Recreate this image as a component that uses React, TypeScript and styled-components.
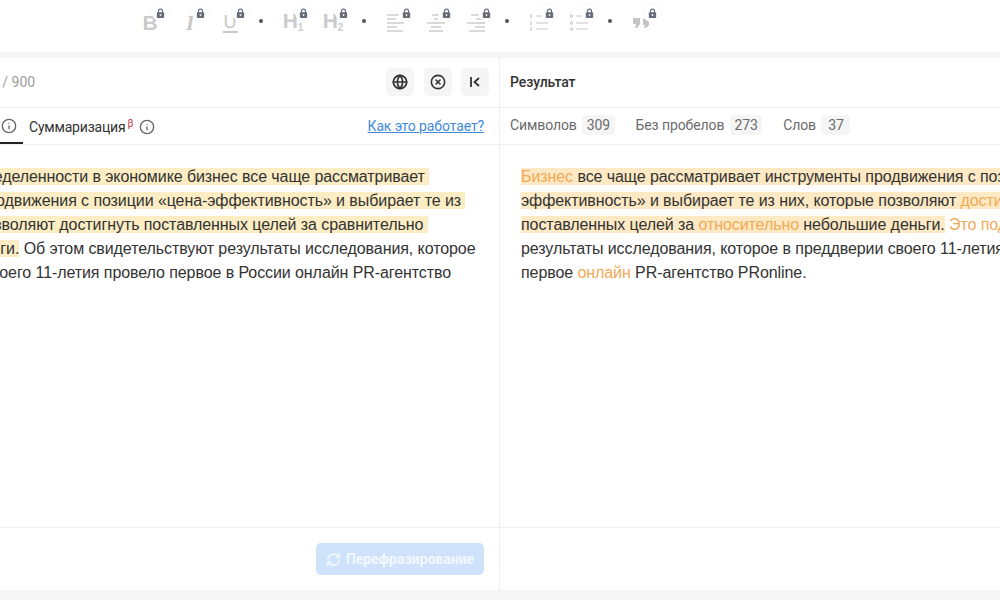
import React from "react";
import styled, { createGlobalStyle } from "styled-components";
import { CircleX, Globe, Info, RefreshCw } from "lucide-react";

const GlobalStyle = createGlobalStyle`
  html, body {
    margin: 0;
    height: 100%;
    overflow: hidden;
    background: #f6f6f6;
  }
  body {
    font-family: "Liberation Sans", Arial, sans-serif;
  }
  #root {
    height: 100%;
  }
`;

const ALIGN = {
  left: [[1, 15], [1, 10], [1, 18], [1, 11], [1, 17]],
  center: [[6, 14], [8, 12], [1, 19], [5, 15], [3, 17]],
  right: [[5, 19], [10, 19], [1, 19], [9, 19], [3, 19]],
};

const AlignIcon: React.FC<{ kind: keyof typeof ALIGN }> = ({ kind }) => (
  <svg width="20" height="20" viewBox="0 0 20 20" stroke="#c4c4c4" strokeWidth="1.3">
    {ALIGN[kind].map(([a, b], i) => (
      <line key={i} x1={a} x2={b} y1={2 + i * 4} y2={2 + i * 4} />
    ))}
  </svg>
);

const ListIcon: React.FC<{ numbered?: boolean }> = ({ numbered }) => (
  <svg width="20" height="20" viewBox="0 0 20 20" stroke="#cccccc" strokeWidth="1.1" fill="none">
    {[3, 10, 16].map((y) => (
      <g key={y}>
        <line x1="7" x2="19" y1={y} y2={y} />
        {numbered ? (
          <line x1="2" x2="2" y1={y - 2} y2={y + 2} strokeWidth="1.4" />
        ) : (
          <circle cx="2.5" cy={y} r="1.2" />
        )}
      </g>
    ))}
  </svg>
);

const QuoteIcon = () => (
  <svg width="20" height="20" viewBox="0 0 20 20" fill="#c4c4c4">
    <path d="M1 5h7v6l-3 4H3l1-4H1zM11 5l6 4v3l-3 3h-2l1-3h-2z" />
  </svg>
);

const LockIcon = () => (
  <svg width="9" height="11" viewBox="0 0 11 13" fill="none">
    <path d="M3 5.5V3.6a2.5 2.5 0 0 1 5 0v1.9" stroke="#666c78" strokeWidth="1.5" />
    <rect x="1" y="5" width="9" height="7" rx="1.2" fill="#666c78" />
    <circle cx="5.5" cy="8.4" r="1.1" fill="#fff" />
  </svg>
);

const App: React.FC = () => {
  const tools: Array<React.ReactNode | "dot"> = [
    <Letter>B</Letter>,
    <SlabItalic>I</SlabItalic>,
    <UnderlineLetter>U</UnderlineLetter>,
    "dot",
    <Letter>H<small>1</small></Letter>,
    <Letter>H<small>2</small></Letter>,
    "dot",
    <AlignIcon kind="left" />,
    <AlignIcon kind="center" />,
    <AlignIcon kind="right" />,
    "dot",
    <ListIcon numbered />,
    <ListIcon />,
    "dot",
    <QuoteIcon />,
  ];

  return (
    <Page>
      <GlobalStyle />
      <Toolbar>
        {tools.map((tool, i) =>
          tool === "dot" ? (
            <DotSlot key={i} />
          ) : (
            <ToolItem key={i}>
              {tool}
              <LockBadge>
                <LockIcon />
              </LockBadge>
            </ToolItem>
          )
        )}
      </Toolbar>
      <Workspace>
        <Panel>
          <PanelHeader>
            <Counter>0 / 900</Counter>
            <HeaderActions>
              <IconButton>
                <Globe size={16} strokeWidth={2.6} />
              </IconButton>
              <IconButton>
                <CircleX size={16} strokeWidth={2.4} />
              </IconButton>
              <IconButton>
                <svg width="14" height="14" viewBox="0 0 14 14" fill="none" stroke="#333" strokeWidth="1.8">
                  <path d="M3 2v10M11 3L6.5 7l4.5 4" />
                </svg>
              </IconButton>
            </HeaderActions>
          </PanelHeader>
          <TabsRow>
            <Tabs>
              <ActiveTab>
                <Info size={16} color="#666" />
              </ActiveTab>
              <Tab>
                Суммаризация<Beta>β</Beta>
                <Info size={16} color="#666" />
              </Tab>
            </Tabs>
            <HowLink>Как это работает?</HowLink>
          </TabsRow>
          <SourceText>
            <Line><Mark>В рамках неопределенности в экономике бизнес все чаще рассматривает </Mark></Line>
            <Line><Mark>инструменты продвижения с позиции «цена-эффективность» и выбирает те из </Mark></Line>
            <Line><Mark>них, которые позволяют достигнуть поставленных целей за сравнительно </Mark></Line>
            <Line><Mark>небольшие деньги.</Mark> Об этом свидетельствуют результаты исследования, которое</Line>
            <Line>в преддверии своего 11-летия провело первое в России онлайн PR-агентство</Line>
          </SourceText>
          <PanelFooter>
            <SubmitButton>
              <RefreshCw size={15} strokeWidth={2.4} />
              Перефразирование
            </SubmitButton>
          </PanelFooter>
        </Panel>
        <Panel>
          <PanelHeader>
            <ResultTitle>Результат</ResultTitle>
          </PanelHeader>
          <StatsRow>
            <Stat>Символов<Chip>309</Chip></Stat>
            <Stat>Без пробелов<Chip>273</Chip></Stat>
            <Stat>Слов<Chip>37</Chip></Stat>
          </StatsRow>
          <ResultText>
            <Line><Mark $warm><Changed>Бизнес</Changed> все чаще рассматривает инструменты продвижения с позиции «цена-</Mark></Line>
            <Line><Mark $warm>эффективность» и выбирает те из них, которые позволяют <Changed>достигнуть</Changed></Mark></Line>
            <Line><Mark $warm>поставленных целей за <Changed>относительно</Changed> небольшие деньги.</Mark> <Changed>Это подтверждают</Changed></Line>
            <Line>результаты исследования, которое в преддверии своего 11-летия провело</Line>
            <Line>первое <Changed>онлайн</Changed> PR-агентство PRonline.</Line>
          </ResultText>
          <PanelFooter />
        </Panel>
      </Workspace>
    </Page>
  );
};

const Page = styled.div`
  height: 100%;
  display: flex;
  flex-direction: column;
  padding-bottom: 10px;
  box-sizing: border-box;
`;

const Toolbar = styled.div`
  height: 52px;
  flex: none;
  display: flex;
  align-items: center;
  padding: 0 0 6px 130px;
  box-sizing: border-box;
  background: #fff;
  margin-bottom: 6px;
`;

const ToolItem = styled.div`
  position: relative;
  width: 40px;
  height: 20px;
  display: flex;
  align-items: center;
  justify-content: center;
`;

const LockBadge = styled.span`
  position: absolute;
  top: -8px;
  left: 22px;
  width: 16px;
  height: 16px;
  border-radius: 50%;
  background: #fff;
  box-shadow: 0 0 4px rgba(0, 0, 0, 0.05);
  display: flex;
  align-items: center;
  justify-content: center;
`;

const DotSlot = styled.div`
  width: 23px;
  box-sizing: border-box;
  padding-right: 1px;
  margin-top: -5px;
  display: flex;
  justify-content: center;
  &::before {
    content: "";
    width: 4px;
    height: 4px;
    border-radius: 50%;
    background: #555;
  }
`;

const Letter = styled.span`
  font-size: 21px;
  font-weight: 700;
  color: #cbcbcb;
  line-height: 20px;
  small {
    font-size: 10px;
    position: relative;
    top: 3px;
  }
`;

const SlabItalic = styled.span`
  font-family: "Liberation Serif", serif;
  font-size: 21px;
  font-style: italic;
  font-weight: 700;
  color: #c8c8c8;
  line-height: 20px;
`;

const UnderlineLetter = styled.span`
  font-size: 18px;
  color: #c8c8c8;
  line-height: 17px;
  border-bottom: 2px solid #c8c8c8;
  padding: 0 1px;
`;

const Workspace = styled.div`
  flex: 1;
  display: grid;
  grid-template-columns: 500px 500px;
  background: #fff;
  min-height: 0;
`;

const Panel = styled.section`
  display: flex;
  flex-direction: column;
  overflow: hidden;
  min-width: 0;
  &:first-child {
    border-right: 1px solid #eeeeee;
  }
`;

const PanelHeader = styled.header`
  height: 50px;
  flex: none;
  display: flex;
  align-items: center;
  justify-content: space-between;
  padding: 0 10px 2px;
  box-sizing: border-box;
  border-bottom: 1px solid #f0f0f0;
`;

const Counter = styled.span`
  font-family: Roboto, sans-serif;
  font-size: 14px;
  color: #9b9b9b;
  margin-left: -19px;
`;

const HeaderActions = styled.div`
  display: flex;
  gap: 9.5px;
`;

const IconButton = styled.button`
  width: 28px;
  height: 28px;
  padding: 0;
  border: 0;
  border-radius: 5px;
  background: #f5f5f5;
  color: #333;
  display: flex;
  align-items: center;
  justify-content: center;
`;

const ResultTitle = styled.h2`
  margin: 0;
  font-family: Roboto, sans-serif;
  font-size: 14px;
  font-weight: 500;
  letter-spacing: -0.1px;
  color: #333;
`;

const TabsRow = styled.div`
  height: 37px;
  flex: none;
  display: flex;
  align-items: center;
  justify-content: space-between;
  padding-right: 15px;
  box-sizing: border-box;
  border-bottom: 1px solid #f0f0f0;
`;

const Tabs = styled.div`
  display: flex;
  height: 100%;
`;

const Tab = styled.div`
  display: flex;
  align-items: center;
  padding: 2px 0 0 6px;
  font-family: Roboto, sans-serif;
  font-size: 14px;
  letter-spacing: -0.2px;
  color: #333;
  svg {
    margin-left: 6px;
  }
`;

const ActiveTab = styled.div`
  width: 23px;
  height: 100%;
  box-sizing: border-box;
  display: flex;
  align-items: center;
  justify-content: flex-end;
  padding: 2px 6px 0 0;
  border-bottom: 2px solid #222;
`;

const Beta = styled.sup`
  font-size: 10px;
  color: #c2344d;
  margin: -6px 0 0 2px;
  line-height: 1;
`;

const HowLink = styled.a`
  font-family: Roboto, sans-serif;
  font-size: 14px;
  letter-spacing: -0.12px;
  color: #3f8ad8;
  text-decoration: underline;
`;

const StatsRow = styled.div`
  height: 37px;
  flex: none;
  display: flex;
  align-items: center;
  gap: 21px;
  padding: 0 0 2px 10px;
  box-sizing: border-box;
  border-bottom: 1px solid #f0f0f0;
`;

const Stat = styled.div`
  display: flex;
  align-items: center;
  gap: 5.5px;
  font-family: Roboto, sans-serif;
  font-size: 14px;
  letter-spacing: -0.1px;
  color: #6b6b6b;
`;

const Chip = styled.span`
  min-width: 20px;
  padding: 2px 4.5px;
  border-radius: 4px;
  background: #f5f5f5;
  text-align: center;
  color: #6b6b6b;
`;

const TextArea = styled.div`
  flex: 1;
  padding-top: 20px;
  font-size: 16px;
  line-height: 24px;
  letter-spacing: -0.08px;
  color: #333;
  white-space: pre;
`;

const SourceText = styled(TextArea)`
  margin-left: -122px;
`;

const ResultText = styled(TextArea)`
  padding-left: 21px;
`;

const Line = styled.div``;

const Mark = styled.span<{ $warm?: boolean }>`
  background: ${(p) => (p.$warm ? "#fde9c3" : "#fcedc4")};
`;

const Changed = styled.span`
  color: #f2a957;
`;

const PanelFooter = styled.footer`
  height: 63px;
  flex: none;
  display: flex;
  align-items: center;
  justify-content: flex-end;
  padding-right: 15px;
  box-sizing: border-box;
  border-top: 1px solid #f0f0f0;
`;

const SubmitButton = styled.button`
  width: 168px;
  height: 32px;
  padding: 0;
  border: 0;
  border-radius: 5px;
  background: #cfe2fb;
  color: #f3f8ff;
  font-family: Roboto, sans-serif;
  font-size: 14px;
  font-weight: 700;
  display: flex;
  align-items: center;
  justify-content: center;
  gap: 5px;
`;

export default App;
